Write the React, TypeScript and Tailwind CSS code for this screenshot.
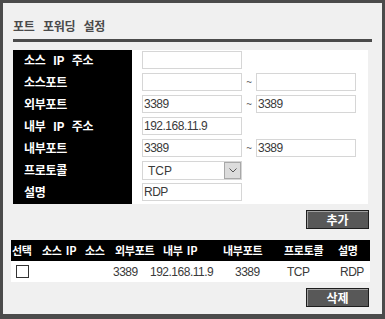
import React from 'react';

type FormRow = {
  label: string;
  from?: string;
  to?: string;
  range?: boolean;
  select?: boolean;
};

const formRows: FormRow[] = [
  { label: '소스 IP 주소', from: '' },
  { label: '소스포트', from: '', to: '', range: true },
  { label: '외부포트', from: '3389', to: '3389', range: true },
  { label: '내부 IP 주소', from: '192.168.11.9' },
  { label: '내부포트', from: '3389', to: '3389', range: true },
  { label: '프로토콜', from: 'TCP', select: true },
  { label: '설명', from: 'RDP' },
];

const ko = "font-['Noto_Sans_CJK_KR',sans-serif]";
const num = "font-['Liberation_Sans','Noto_Sans_CJK_KR',sans-serif]";

const TextBox = ({ value }: { value: string }) => (
  <input
    readOnly
    defaultValue={value}
    className={`${num} w-[100px] h-[18px] border border-[#d6d6d6] bg-white px-px text-[12px] tracking-[-0.5px] text-[#3a3a3a] outline-none`}
  />
);

const SelectBox = ({ value }: { value: string }) => (
  <div className="flex h-[19px] w-[100px] items-center border border-[#d6d6d6] bg-white">
    <span className={`${num} flex-1 pl-[5px] text-[12px] text-[#3a3a3a]`}>{value}</span>
    <span className="flex h-[17px] w-[17px] items-center justify-center border border-[#a8a8a8] bg-[#dcdcdc]">
      <svg width="8" height="5" viewBox="0 0 8 5" fill="none">
        <path d="M0.5 0.5 L4 4 L7.5 0.5" stroke="#555" strokeWidth="1" />
      </svg>
    </span>
  </div>
);

const DarkButton = ({ label }: { label: string }) => (
  <button
    className={`${ko} flex h-[19px] w-[63px] items-center justify-center border border-[#1e1e1e] bg-[#585858] text-[12px] font-bold text-white shadow-[inset_1px_1px_0_#a0a0a0]`}
  >
    {label}
  </button>
);

export default function App() {
  return (
    <div className="h-[319px] w-[385px] bg-[#4b4b4b] pb-[5px] pl-[3px] pr-[3px] pt-[3px]">
      <div className="h-full bg-[#f0f0f0]">
        {/* Title */}
        <div className="px-[10px] pt-[15px]">
          <h1 className={`${ko} text-[12px] font-bold leading-[16px] tracking-[-0.3px] text-[#4a4a4a] [word-spacing:6px]`}>
            포트 포워딩 설정
          </h1>
          <div className="mt-[5px] h-[3px] bg-[#4b4b4b]" />
        </div>

        {/* Form */}
        <div className="ml-[10px] mr-[14px] mt-[8px] flex bg-white">
          <div className="w-[119px] bg-black">
            {formRows.map((r) => (
              <div
                key={r.label}
                className={`${ko} flex h-[22px] items-center whitespace-pre pb-[2px] pl-[11px] text-[12px] font-bold tracking-[-0.3px] text-white [word-spacing:5px]`}
              >
                {r.label}
              </div>
            ))}
          </div>
          <div className="pl-[10px]">
            {formRows.map((r) => (
              <div key={r.label} className="flex h-[22px] items-start pt-px">
                {r.select ? <SelectBox value={r.from ?? ''} /> : <TextBox value={r.from ?? ''} />}
                {r.range && (
                  <>
                    <span className="w-[14px] pt-[2px] text-center text-[10px] text-[#666]">~</span>
                    <TextBox value={r.to ?? ''} />
                  </>
                )}
              </div>
            ))}
          </div>
        </div>

        <div className="mr-[13px] mt-[6px] flex justify-end">
          <DarkButton label="추가" />
        </div>

        {/* Table */}
        <div className="ml-[8px] mr-[12px] mt-[11px]">
          <div className={`${ko} flex h-[21px] items-center whitespace-nowrap bg-black pl-px text-[11px] font-bold tracking-[-0.3px] text-white [word-spacing:2px]`}>
            <span className="w-[30px]">선택</span>
            <span className="w-[43px]">소스 IP</span>
            <span className="w-[30px]">소스</span>
            <span className="w-[48px]">외부포트</span>
            <span className="w-[60px]">내부 IP</span>
            <span className="w-[61px]">내부포트</span>
            <span className="w-[54px]">프로토콜</span>
            <span>설명</span>
          </div>
          <div className={`${num} flex h-[21px] items-center bg-white pl-[5px] text-[12px] tracking-[-0.5px] text-[#3a3a3a]`}>
            <span className="w-[97px]">
              <span className="block h-[13px] w-[13px] border border-[#333] bg-white" />
            </span>
            <span className="w-[37px]">3389</span>
            <span className="w-[85px]">192.168.11.9</span>
            <span className="w-[52px]">3389</span>
            <span className="w-[53px]">TCP</span>
            <span>RDP</span>
          </div>
        </div>

        <div className="mr-[13px] mt-[6px] flex justify-end">
          <DarkButton label="삭제" />
        </div>
      </div>
    </div>
  );
}
